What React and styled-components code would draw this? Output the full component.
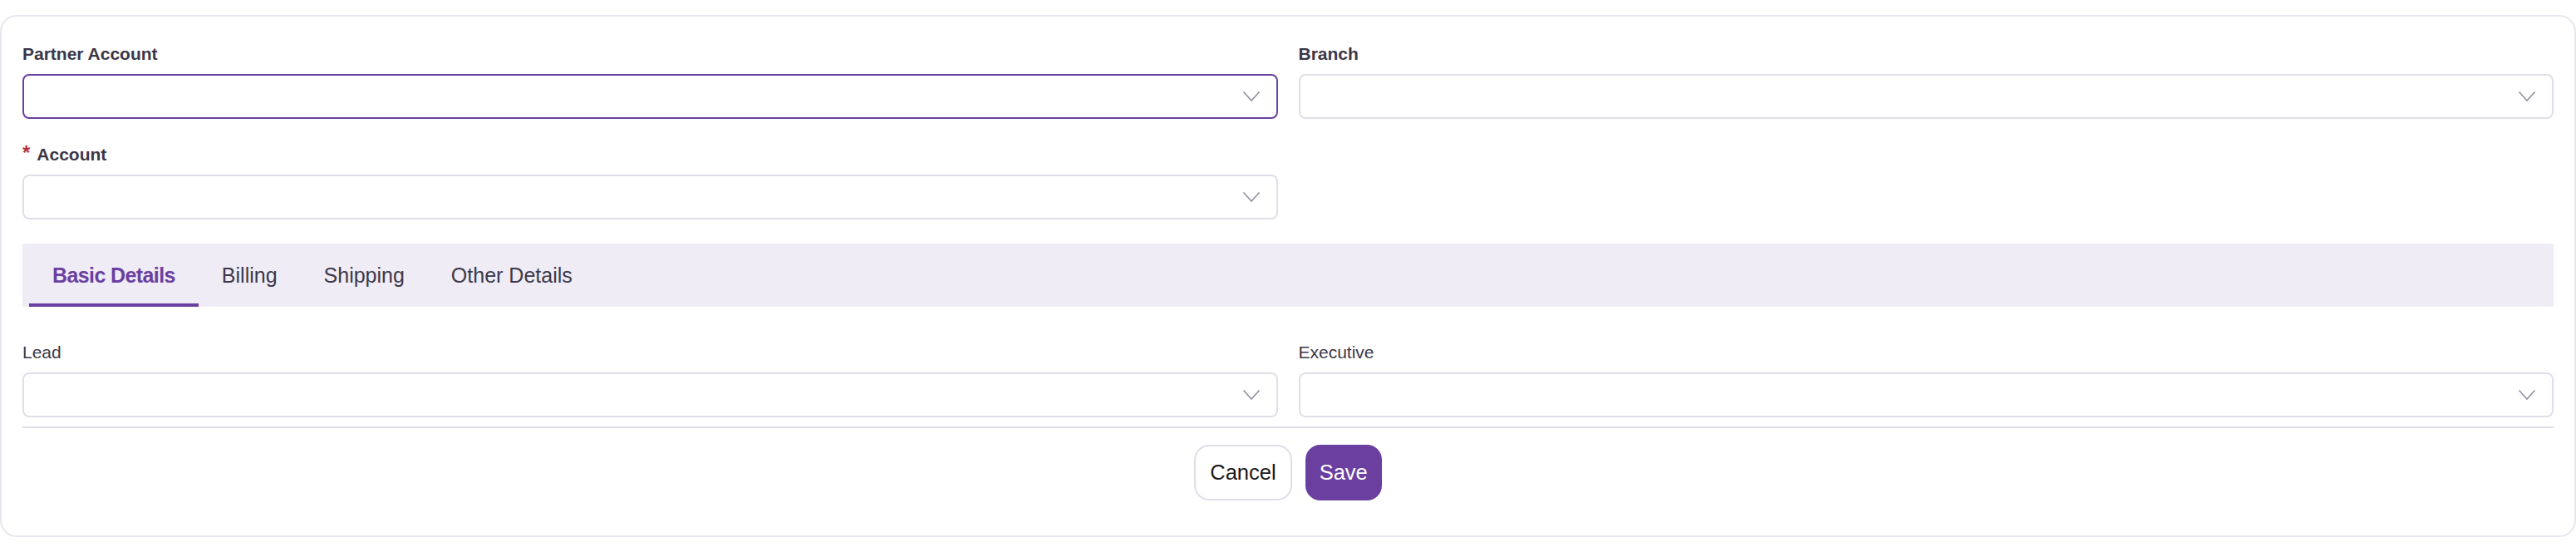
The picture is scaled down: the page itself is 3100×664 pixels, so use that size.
import React, { useState } from 'react'
import styled, { createGlobalStyle } from 'styled-components'

const purple = '#6a3f9f'
const line = '#e0dee8'

const GlobalStyle = createGlobalStyle`
  body {
    margin: 0;
    background: #fff;
    font-family: "Liberation Sans", Arial, sans-serif;
  }
`

const Card = styled.form`
  margin-top: 18px;
  border: 2px solid #e8e6ee;
  border-radius: 20px;
  padding: 31px 25px 42px 25px;
  background: #fff;
`

const Grid = styled.div`
  display: grid;
  grid-template-columns: 1fr 1fr;
  column-gap: 25px;
  row-gap: 29px;
`

const Field = styled.div`
  display: flex;
  flex-direction: column;
`

const Label = styled.label`
  display: flex;
  align-items: center;
  height: 28px;
  margin-bottom: 10px;
  font-size: 21px;
  font-weight: ${p => (p.$light ? 400 : 700)};
  color: #3b3747;
`

const Star = styled.span`
  color: #b5303e;
  font-size: 24px;
  font-weight: 700;
  margin-right: 8px;
  align-self: flex-start;
  line-height: 24px;
`

const Select = styled.div`
  height: 54px;
  box-sizing: border-box;
  border: 2px solid ${p => (p.$focused ? purple : line)};
  border-radius: 8px;
  display: flex;
  align-items: center;
  justify-content: flex-end;
  padding-right: 19px;
  background: #fff;
`

const Chevron = () => (
  <svg width="22" height="14" viewBox="0 0 22 14" fill="none">
    <path d="M1.5 1.5 L11 12 L20.5 1.5" stroke="#9591a3" strokeWidth="1.7" />
  </svg>
)

const Tabs = styled.div`
  margin-top: 29px;
  height: 76px;
  background: #efecf6;
  display: flex;
  padding-left: 8px;
`

const Tab = styled.div`
  display: flex;
  align-items: center;
  padding: 4px 28px 0 28px;
  font-size: 25px;
  letter-spacing: ${p => (p.$active ? '-0.6px' : '0')};
  font-weight: ${p => (p.$active ? 700 : 400)};
  color: ${p => (p.$active ? purple : '#3c3848')};
  border-bottom: 4px solid ${p => (p.$active ? purple : 'transparent')};
  cursor: pointer;
`

const Section = styled(Grid)`
  margin-top: 41px;
`

const Divider = styled.hr`
  border: none;
  border-top: 2px solid ${line};
  margin: 11px 0 20px 0;
`

const Actions = styled.div`
  display: flex;
  justify-content: center;
  gap: 16px;
`

const Button = styled.button`
  height: 67px;
  padding: 0 17px;
  border-radius: 18px;
  font-family: "Liberation Sans", Arial, sans-serif;
  font-size: 25.5px;
  cursor: pointer;
  border: ${p => (p.$primary ? 'none' : `2px solid ${line}`)};
  background: ${p => (p.$primary ? purple : '#fff')};
  color: ${p => (p.$primary ? '#fff' : '#1a1a1a')};
`

const SelectField = ({ label, required, light, focused }) => (
  <Field>
    <Label $light={light}>
      {required && <Star>*</Star>}
      {label}
    </Label>
    <Select $focused={focused}>
      <Chevron />
    </Select>
  </Field>
)

const tabs = ['Basic Details', 'Billing', 'Shipping', 'Other Details']

export default function App() {
  const [active, setActive] = useState('Basic Details')

  return (
    <>
      <GlobalStyle />
      <Card onSubmit={e => e.preventDefault()}>
        <Grid>
          <SelectField label="Partner Account" focused />
          <SelectField label="Branch" />
          <SelectField label="Account" required />
        </Grid>

        <Tabs>
          {tabs.map(t => (
            <Tab key={t} $active={t === active} onClick={() => setActive(t)}>
              {t}
            </Tab>
          ))}
        </Tabs>

        <Section>
          <SelectField label="Lead" light />
          <SelectField label="Executive" light />
        </Section>

        <Divider />

        <Actions>
          <Button type="button">Cancel</Button>
          <Button type="submit" $primary>Save</Button>
        </Actions>
      </Card>
    </>
  )
}
